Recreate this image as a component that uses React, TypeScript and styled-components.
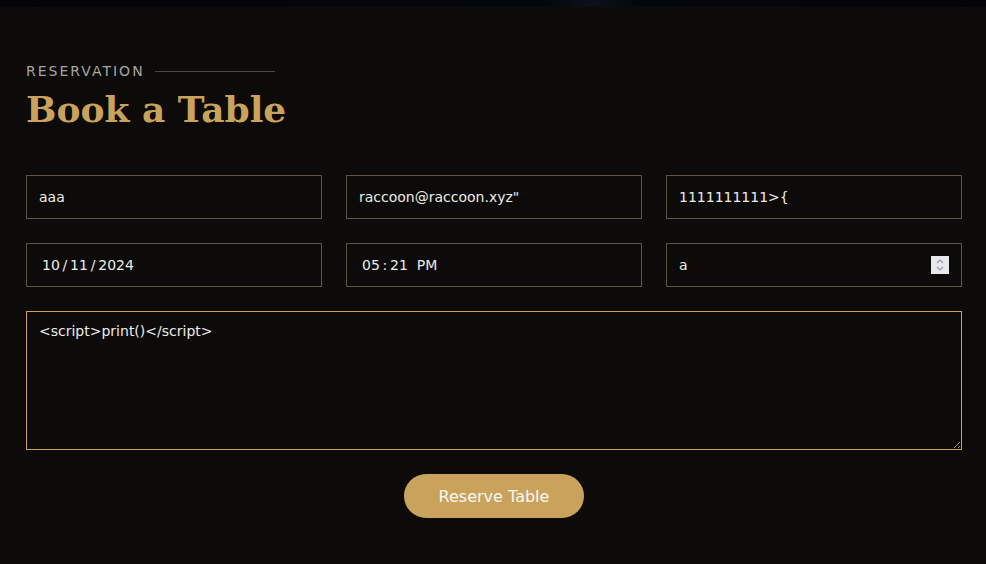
import React from "react";
import styled, { createGlobalStyle } from "styled-components";

const Global = createGlobalStyle`
  html, body { margin: 0; padding: 0; background: #0c0b09; }
  body { font-family: "DejaVu Sans", sans-serif; }
  * { box-sizing: border-box; }
`;

const TopBar = styled.div`
  height: 7px;
  background: linear-gradient(90deg, #020609 0%, #02070c 55%, #0a1118 60%, #02070c 65%, #020609 100%);
`;

const Section = styled.section`
  padding: 55px 24px 46px 26px;
  background: #0c0b09;
`;

const Eyebrow = styled.div`
  display: flex;
  align-items: center;
  gap: 10px;
  font-family: "DejaVu Sans", sans-serif;
  font-size: 14px;
  letter-spacing: 2px;
  color: #a6a5a2;
  text-transform: uppercase;
  line-height: 18px;
`;

const Rule = styled.span`
  display: block;
  width: 120px;
  height: 1px;
  background: #4a4844;
`;

const Title = styled.h2`
  margin: 7px 0 0;
  font-family: "DejaVu Serif", serif;
  font-weight: 700;
  font-size: 36px;
  line-height: 44px;
  color: #c9a35c;
`;

const Form = styled.form`
  margin-top: 44px;
  display: flex;
  flex-direction: column;
  gap: 24px;
`;

const Grid = styled.div`
  display: grid;
  grid-template-columns: repeat(3, 1fr);
  gap: 24px;
`;

const Field = styled.div`
  position: relative;
`;

const Input = styled.input<{ $inset?: boolean }>`
  width: 100%;
  height: 44px;
  padding: 0 12px 0 ${(p) => (p.$inset ? "15px" : "12px")};
  background: #0c0b09;
  border: 1px solid #5e5545;
  border-radius: 0;
  color: #ecebe8;
  font-family: "DejaVu Sans", sans-serif;
  font-size: 14px;
  outline: none;
  white-space: pre;
`;

const Spinner = styled.span`
  position: absolute;
  right: 13px;
  top: 13px;
  width: 18px;
  height: 18px;
  background: #e9e8ee;
  display: flex;
  align-items: center;
  justify-content: center;
`;

const TextArea = styled.textarea<{ $focused?: boolean }>`
  display: block;
  width: 100%;
  height: 139px;
  padding: 11px 12px;
  background: #0c0b09;
  border: 1px solid ${(p) => (p.$focused ? "#c9a35c" : "#5e5545")};
  border-radius: 0;
  color: #ecebe8;
  font-family: "DejaVu Sans", sans-serif;
  font-size: 14px;
  outline: none;
  resize: vertical;
`;

const Actions = styled.div`
  display: flex;
  justify-content: center;
`;

const Button = styled.button`
  width: 180px;
  height: 44px;
  border: none;
  border-radius: 22px;
  background: #c9a35c;
  color: #faf7f0;
  font-family: "DejaVu Sans", sans-serif;
  font-size: 16px;
  cursor: pointer;
`;

export default function App() {
  return (
    <>
      <Global />
      <TopBar />
      <Section>
        <Eyebrow>
          Reservation
          <Rule />
        </Eyebrow>
        <Title>Book a Table</Title>
        <Form onSubmit={(e) => e.preventDefault()}>
          <Grid>
            <Input type="text" defaultValue="aaa" />
            <Input type="text" defaultValue={'raccoon@raccoon.xyz"'} />
            <Input type="text" defaultValue="1111111111>{" />
          </Grid>
          <Grid>
            <Input type="text" $inset defaultValue={"10\u2009/\u200911\u2009/\u20092024"} />
            <Input type="text" $inset defaultValue={"05\u2009:\u200921  PM"} />
            <Field>
              <Input type="text" defaultValue="a" />
              <Spinner>
                <svg width="10" height="14" viewBox="0 0 10 14" fill="none" stroke="#9c9aa6" strokeWidth="1.2">
                  <path d="M2 5 L5 2 L8 5" />
                  <path d="M2 9 L5 12 L8 9" />
                </svg>
              </Spinner>
            </Field>
          </Grid>
          <TextArea $focused defaultValue="<script>print()</script>" />
          <Actions>
            <Button type="submit">Reserve Table</Button>
          </Actions>
        </Form>
      </Section>
    </>
  );
}
